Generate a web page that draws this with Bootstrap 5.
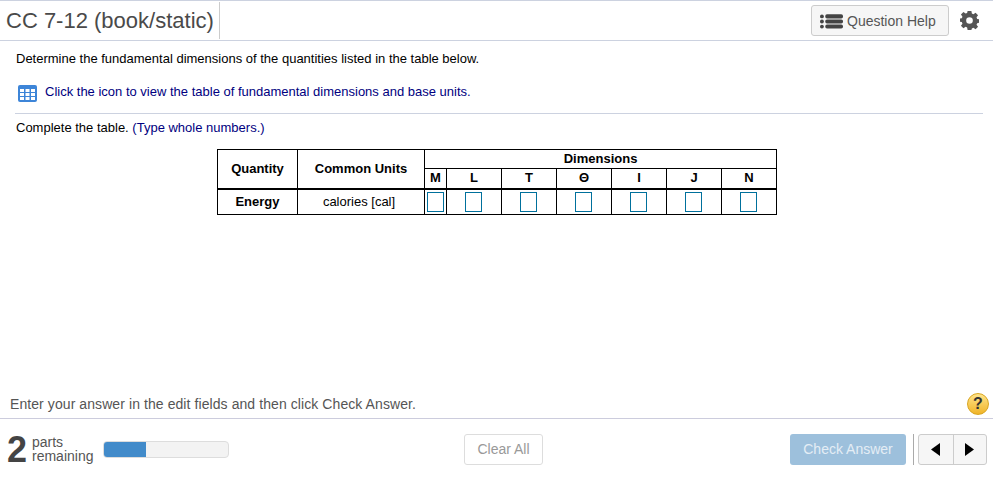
<!DOCTYPE html>
<html>
<head>
  <link href="https://cdn.jsdelivr.net/npm/bootstrap@5.3.0/dist/css/bootstrap.min.css" rel="stylesheet">
  <script src="https://cdn.jsdelivr.net/npm/bootstrap@5.3.0/dist/js/bootstrap.bundle.min.js"></script>
  <style>
    html, body { height: 100%; overflow: hidden; }
    body { font-family: "Liberation Sans", Arial, sans-serif; color: #000; background: #fff; }
    .player-wrap { height: 480px; }
    .title-bar { height: 41px; border-top: 1px solid #ccd2e0; border-bottom: 1px solid #ccd2e0; }
    .title-text { font-size: 22px; line-height: 37px; color: #4a4a4a; margin: 1px 0 0 6px; padding-right: 5px; border-right: 1px solid #ccc; height: 37px; }
    .help-btn { height: 31px; width: 138px; margin-right: 11px; padding: 1px 0 0 8px; font-size: 14px; color: #555; background: #f6f6f6; border: 1px solid #ccc; border-radius: 3px; gap: 4px; }
    .gear-box { margin-right: 14px; line-height: 0; }
    .question-body { padding: 0 0 0 16px; font-size: 13px; line-height: 14px; }
    .q-line { margin: 11px 0 0; }
    .icon-line { margin: 19px 0 0 2px; color: #000080; height: 18px; }
    .rule-line { border-top: 1px solid #ccd2e0; margin: 10px 10px 0 -1px; }
    .q-line.after-rule { margin-top: 7px; }
    .navy-text { color: #000080; }
    .dim-table { border-collapse: collapse; table-layout: fixed; width: 560px; margin: 14px 0 0 201px; font-size: 13px; }
    .dim-table th, .dim-table td { border: 1px solid #000; text-align: center; padding: 0; line-height: 14px; }
    .dim-table .head-row th { height: 19px; }
    .dim-table .sub-row th { height: 20px; }
    .dim-table .sub-row th, .dim-table .rowspan-cell { border-bottom: 2px solid #000; }
    .dim-table .entry-row td, .dim-table .entry-row th { height: 26px; }
    .dim-table th { font-weight: 700; }
    .dim-table td.unit-cell { padding-right: 4px; }
    .cw-q { width: 80px; } .cw-u { width: 127px; } .cw-m { width: 22px; } .cw-d { width: 55px; }
    .answer-box { display: block; width: 17px; height: 20px; margin: 0 0 0 18px; border: 1px solid #00709c; background: #fff; padding: 0; }
    .answer-box.first-box { margin-left: 2px; }
    .hint-line { height: 31px; padding: 2px 4px 0 10px; border-bottom: 1px solid #ccd; font-size: 14px; letter-spacing: .08px; color: #555; }
    .hint-dot { width: 22px; height: 22px; border-radius: 50%; font-size: 16px; font-weight: 700; color: #333; border: 1px solid #d9a520; background: linear-gradient(#ffe48a, #f0b429); line-height: 20px; text-align: center; margin-top: -1px; }
    .foot-bar { height: 61px; padding: 0 6px 0 7px; }
    .parts-num { font-size: 36px; font-weight: 700; color: #444; line-height: 36px; width: 25px; }
    .parts-word { font-size: 14px; line-height: 14px; color: #555; width: 72px; margin-top: -2px; }
    .parts-track { width: 126px; height: 17px; background: #f3f3f3; border: 1px solid #ddd; border-radius: 4px; overflow: hidden; margin-left: -1px; }
    .parts-fill { height: 100%; background: #428bca; width: 42px; }
    .clear-btn { width: 79px; height: 31px; padding: 0; font-size: 14px; color: #999; background: #fff; border: 1px solid #ddd; border-radius: 3px; margin-left: 235px; }
    .check-btn { width: 116px; height: 31px; padding: 0; font-size: 14px; color: #e4edf5; background: #9dc0dc; border: 0; border-radius: 3px; }
    .nav-split { width: 1px; height: 31px; background: #aaa; margin: 0 4px 0 7px; }
    .arrow-group { width: 69px; height: 31px; border: 1px solid #ccc; border-radius: 3px; background: #f6f6f6; }
    .arrow-cell { width: 34px; height: 100%; }
    .arrow-cell + .arrow-cell { border-left: 1px solid #ccc; }
  </style>
</head>
<body>
<div class="player-wrap d-flex flex-column">
  <div class="title-bar d-flex align-items-start">
    <div class="title-text">CC 7-12 (book/static)</div>
    <div class="ms-auto d-flex align-items-center mt-1">
      <button class="help-btn d-flex align-items-center" type="button">
        <svg width="23" height="15" viewBox="0 0 24 15"><g fill="#444"><circle cx="2" cy="2.200" r="2"/><circle cx="2" cy="7.500" r="2"/><circle cx="2" cy="12.800" r="2"/><rect x="5.500" y="0" width="18.500" height="4.300" rx="1.800"/><rect x="5.500" y="5.300" width="18.500" height="4.300" rx="1.800"/><rect x="5.500" y="10.600" width="18.500" height="4.300" rx="1.800"/></g></svg>
        <span>Question Help</span>
      </button>
      <div class="gear-box">
        <svg width="19" height="19" viewBox="0 0 20 20"><path fill="#555" fill-rule="evenodd" d="M8 0h4l.5 2.7 1.6.7L16.400 1.800 19 4.400l-1.600 2.300.7 1.600L20 8.800v3.600l-1.900.4-.7 1.600 1.600 2.300-2.600 2.600-2.300-1.600-1.600.7L12 20H8l-.5-2.700-1.600-.7-2.300 1.600L1 15.600l1.600-2.300-.7-1.600L0 11.200V8l1.900-.4.700-1.600L1 3.700 3.600 1.100l2.300 1.600 1.600-.7zM10 6.500a3.500 3.500 0 1 0 0 7 3.500 3.500 0 0 0 0-7z"/></svg>
      </div>
    </div>
  </div>

  <div class="question-body flex-grow-1">
    <p class="q-line">Determine the fundamental dimensions of the quantities listed in the table below.</p>
    <div class="icon-line d-flex align-items-start gap-2">
      <svg width="19" height="17" viewBox="0 0 19 17" class="flex-shrink-0"><rect width="19" height="17" rx="2" fill="#3d85d8"/><g fill="#fff"><rect x="2" y="4" width="4" height="3"/><rect x="7.500" y="4" width="4" height="3"/><rect x="13" y="4" width="4" height="3"/><rect x="2" y="8" width="4" height="3"/><rect x="7.500" y="8" width="4" height="3"/><rect x="13" y="8" width="4" height="3"/><rect x="2" y="12" width="4" height="3"/><rect x="7.500" y="12" width="4" height="3"/><rect x="13" y="12" width="4" height="3"/></g></svg>
      <span>Click the icon to view the table of fundamental dimensions and base units.</span>
    </div>
    <div class="rule-line"></div>
    <p class="q-line after-rule mb-0">Complete the table. <span class="navy-text">(Type whole numbers.)</span></p>
    <table class="dim-table">
      <colgroup>
        <col class="cw-q"><col class="cw-u"><col class="cw-m">
        <col class="cw-d"><col class="cw-d"><col class="cw-d"><col class="cw-d"><col class="cw-d"><col class="cw-d">
      </colgroup>
      <tr class="head-row">
        <th rowspan="2" class="rowspan-cell">Quantity</th>
        <th rowspan="2" class="rowspan-cell">Common Units</th>
        <th colspan="7">Dimensions</th>
      </tr>
      <tr class="sub-row">
        <th>M</th><th>L</th><th>T</th><th>&Theta;</th><th>I</th><th>J</th><th>N</th>
      </tr>
      <tr class="entry-row">
        <th>Energy</th>
        <td class="unit-cell">calories [cal]</td>
        <td><input class="answer-box first-box" type="text"></td>
        <td><input class="answer-box" type="text"></td>
        <td><input class="answer-box" type="text"></td>
        <td><input class="answer-box" type="text"></td>
        <td><input class="answer-box" type="text"></td>
        <td><input class="answer-box" type="text"></td>
        <td><input class="answer-box" type="text"></td>
      </tr>
    </table>
  </div>

  <div class="hint-line d-flex align-items-center justify-content-between">
    <span>Enter your answer in the edit fields and then click Check Answer.</span>
    <div class="hint-dot">?</div>
  </div>

  <div class="foot-bar d-flex align-items-center">
    <div class="parts-num">2</div>
    <div class="parts-word">parts<br>remaining</div>
    <div class="parts-track"><div class="parts-fill"></div></div>
    <button class="clear-btn" type="button">Clear All</button>
    <div class="ms-auto d-flex align-items-center">
      <button class="check-btn" type="button">Check Answer</button>
      <div class="nav-split"></div>
      <div class="arrow-group d-flex">
        <div class="arrow-cell d-flex align-items-center justify-content-center"><svg width="9" height="13" viewBox="0 0 9 13"><path d="M9 0v13L0 6.500z"/></svg></div>
        <div class="arrow-cell d-flex align-items-center justify-content-center"><svg width="9" height="13" viewBox="0 0 9 13"><path d="M0 0v13l9-6.500z"/></svg></div>
      </div>
    </div>
  </div>
</div>
</body>
</html>
